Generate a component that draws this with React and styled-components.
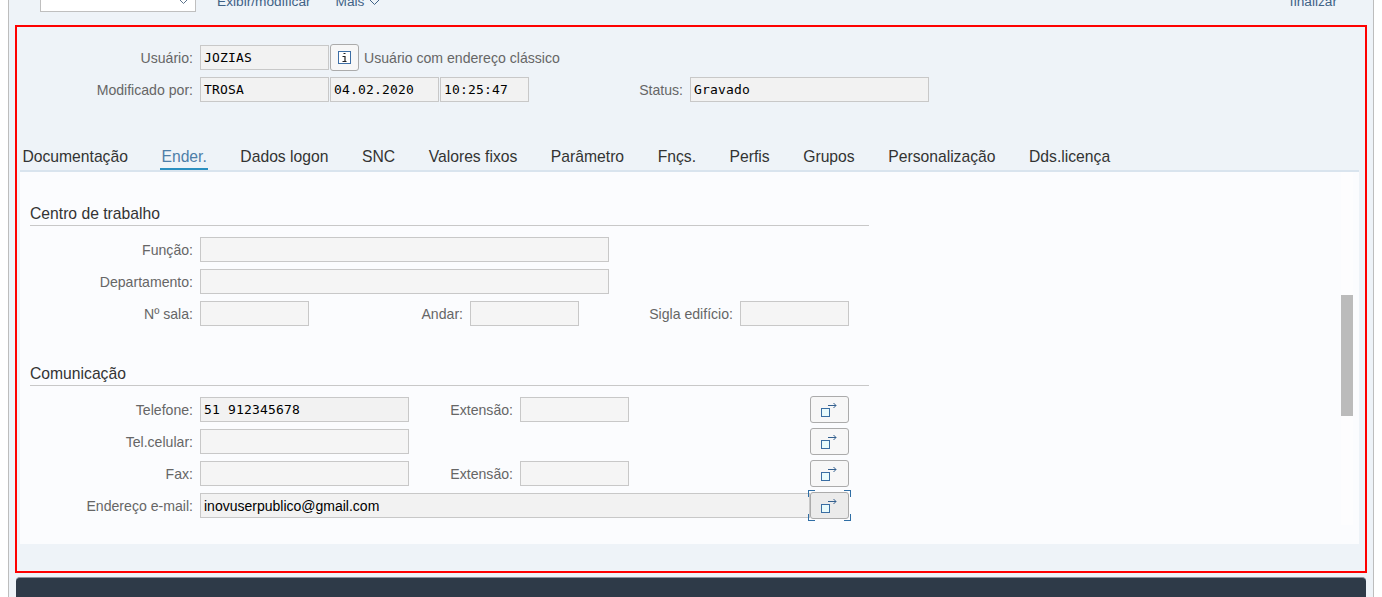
import React from "react";
import styled, { createGlobalStyle } from "styled-components";

const GlobalStyle = createGlobalStyle`
  html, body {
    margin: 0;
    height: 100%;
    background: #fff;
    overflow: hidden;
  }
  body {
    font-family: "Liberation Sans", Arial, sans-serif;
  }
`;

const Shell = styled.div`
  box-sizing: border-box;
  width: 1366px;
  height: 597px;
  margin-left: 8px;
  padding: 0 6px 0 6px;
  background: #eef3f8;
  border-left: 1px solid #bdbdbd;
  border-right: 1px solid #bdbdbd;
  overflow: hidden;
`;

const Toolbar = styled.div`
  height: 25px;
  display: flex;
  align-items: flex-start;
  padding: 0 30px 0 25px;
  overflow: hidden;
`;

const ToolSelect = styled.div`
  box-sizing: border-box;
  width: 156px;
  height: 30px;
  margin-top: -18px;
  flex: none;
  background: #fff;
  border: 1px solid #bfbfbf;
  display: flex;
  justify-content: flex-end;
  align-items: flex-end;
  padding: 0 6px 6px 0;
  color: #5b738b;
`;

const ToolLink = styled.span`
  font-size: 13.7px;
  line-height: 16px;
  margin-top: -6px;
  margin-left: ${(p) => (p.$end ? "auto" : `${p.$gap}px`)};
  color: #3f6286;
  display: inline-flex;
  align-items: center;
  gap: 5px;
  white-space: nowrap;
`;

const Outlined = styled.section`
  box-sizing: border-box;
  width: 1352px;
  height: 548px;
  border: 2px solid #fe0000;
  padding-top: 18px;
  display: flex;
  flex-direction: column;
`;

const HeaderRow = styled.div`
  height: 25px;
  margin-bottom: 7px;
  display: flex;
  align-items: center;
`;

const Label = styled.label`
  flex: none;
  box-sizing: border-box;
  width: ${(p) => p.$w}px;
  padding-right: 7px;
  text-align: right;
  font-size: 14.1px;
  color: #666;
  white-space: nowrap;
`;

const Field = styled.div`
  flex: none;
  box-sizing: border-box;
  width: ${(p) => p.$w}px;
  height: 25px;
  margin-right: ${(p) => p.$mr || 0}px;
  padding: 0 3px;
  background: ${(p) => (p.$empty ? "#f5f5f5" : "#f2f2f2")};
  border: 1px solid #c8c8c8;
  color: #000;
  font-family: ${(p) => (p.$sans ? '"Liberation Sans", Arial, sans-serif' : '"DejaVu Sans Mono", monospace')};
  font-size: ${(p) => (p.$sans ? "14px" : "13px")};
  letter-spacing: ${(p) => (p.$sans ? "0" : "0.17px")};
  line-height: ${(p) => (p.$sans ? "24px" : "23px")};
  white-space: pre;
`;

const InfoButton = styled.button`
  flex: none;
  box-sizing: border-box;
  width: 29px;
  height: 27px;
  margin: 0 5px 0 1px;
  padding: 0;
  background: #f7f7f7;
  border: 1px solid #ababab;
  border-radius: 3px;
  display: flex;
  align-items: center;
  justify-content: center;
`;

const Note = styled.span`
  font-size: 14.1px;
  color: #666;
`;

const Tabs = styled.div`
  margin: 34px 6px 0 3px;
  height: 27px;
  padding-left: 1.4px;
  display: flex;
  border-bottom: 2px solid #d9e4ee;
`;

const Tab = styled.div`
  box-sizing: border-box;
  height: 27px;
  margin-right: 31.55px;
  padding: 0 1px;
  line-height: 27px;
  font-size: 15.7px;
  white-space: nowrap;
  color: ${(p) => (p.$active ? "#4d7ea8" : "#333")};
  border-bottom: 2px solid ${(p) => (p.$active ? "#2a8fc0" : "transparent")};
`;

const Content = styled.div`
  position: relative;
  flex: none;
  box-sizing: border-box;
  height: 372px;
  margin: 0 6px 0 3px;
  padding: 29px 0 0 10px;
  background: #fbfcfe;
`;

const GroupTitle = styled.h3`
  box-sizing: border-box;
  width: 839px;
  height: 25px;
  margin: ${(p) => p.$top || 0}px 0 11px;
  font-size: 15.7px;
  font-weight: 400;
  line-height: 26px;
  color: #333;
  border-bottom: 1px solid #c8c8c8;
`;

const FormRow = styled.div`
  display: flex;
  align-items: center;
  height: 25px;
  margin-bottom: 7px;
  margin-left: -10px;
`;

const Spacer = styled.div`
  flex: none;
  width: ${(p) => p.$w}px;
`;

const LinkButton = styled.button`
  position: relative;
  flex: none;
  box-sizing: border-box;
  width: 39px;
  height: 27px;
  padding: 0;
  background: ${(p) => (p.$focused ? "#ebebeb" : "#f7f7f7")};
  border: 1px solid #ababab;
  border-radius: 3px;
  display: flex;
  align-items: center;
  justify-content: center;
`;

const FocusCorner = styled.span`
  position: absolute;
  width: 6px;
  height: 6px;
  border-color: #2f6ea5;
  border-style: solid;
  border-width: 0;
  ${(p) => (p.$v === "top" ? "top: -3px; border-top-width: 1px;" : "bottom: -3px; border-bottom-width: 1px;")}
  ${(p) => (p.$h === "left" ? "left: -3px; border-left-width: 1px;" : "right: -3px; border-right-width: 1px;")}
`;

const ScrollTrack = styled.div`
  position: absolute;
  top: 0;
  right: 6px;
  bottom: 19px;
  width: 12px;
  background: #fdfdfe;
`;

const ScrollThumb = styled.div`
  margin-top: 123px;
  height: 121px;
  background: #bbbbbb;
`;

const Footer = styled.div`
  height: 40px;
  margin: 4px 0 0 1px;
  width: 1350px;
  background: #2e3a48;
  border-top: 1px solid #8d949c;
  border-radius: 4px 4px 0 0;
`;

const Chevron = () => (
  <svg width="11" height="7" viewBox="0 0 11 7" fill="none" stroke="currentColor" strokeWidth="1">
    <path d="M1 1l4.5 4.5L10 1" />
  </svg>
);

const InfoIcon = () => (
  <svg width="13" height="13" viewBox="0 0 13 13" fill="none">
    <rect x="0.5" y="0.5" width="12" height="12" fill="#fff" stroke="#3d6ea5" />
    <path d="M5.5 2.5h2M4.5 5.5h2.5v5M4.5 10.5h4" stroke="#222" strokeWidth="1.2" />
  </svg>
);

const OutIcon = () => (
  <svg width="17" height="15" viewBox="0 0 17 15" fill="none">
    <rect x="0.5" y="6.5" width="8" height="8" fill="#e9fbfc" stroke="#3a6ea3" />
    <path d="M7 3.5h8M12.5 1l2.5 2.5L12.5 6" stroke="#34608f" strokeWidth="1" />
  </svg>
);

const tabs = [
  "Documentação",
  "Ender.",
  "Dados logon",
  "SNC",
  "Valores fixos",
  "Parâmetro",
  "Fnçs.",
  "Perfis",
  "Grupos",
  "Personalização",
  "Dds.licença",
];

export default function App() {
  return (
    <>
      <GlobalStyle />
      <Shell>
        <Toolbar>
          <ToolSelect>
            <Chevron />
          </ToolSelect>
          <ToolLink $gap={21}>Exibir/modificar</ToolLink>
          <ToolLink $gap={25}>
            Mais <Chevron />
          </ToolLink>
          <ToolLink $end>finalizar</ToolLink>
        </Toolbar>
        <Outlined>
          <HeaderRow>
            <Label $w={183}>Usuário:</Label>
            <Field $w={129}>JOZIAS</Field>
            <InfoButton>
              <InfoIcon />
            </InfoButton>
            <Note>Usuário com endereço clássico</Note>
          </HeaderRow>
          <HeaderRow>
            <Label $w={183}>Modificado por:</Label>
            <Field $w={129} $mr={1}>TROSA</Field>
            <Field $w={109} $mr={1}>04.02.2020</Field>
            <Field $w={89}>10:25:47</Field>
            <Label $w={161}>Status:</Label>
            <Field $w={239}>Gravado</Field>
          </HeaderRow>
          <Tabs>
            {tabs.map((t) => (
              <Tab key={t} $active={t === "Ender."}>
                {t}
              </Tab>
            ))}
          </Tabs>
          <Content>
            <GroupTitle>Centro de trabalho</GroupTitle>
            <FormRow>
              <Label $w={180}>Função:</Label>
              <Field $w={409} $empty />
            </FormRow>
            <FormRow>
              <Label $w={180}>Departamento:</Label>
              <Field $w={409} $empty />
            </FormRow>
            <FormRow>
              <Label $w={180}>Nº sala:</Label>
              <Field $w={109} $empty />
              <Label $w={161}>Andar:</Label>
              <Field $w={109} $empty />
              <Label $w={161}>Sigla edifício:</Label>
              <Field $w={109} $empty />
            </FormRow>
            <GroupTitle $top={35}>Comunicação</GroupTitle>
            <FormRow>
              <Label $w={180}>Telefone:</Label>
              <Field $w={209}>51 912345678</Field>
              <Label $w={111}>Extensão:</Label>
              <Field $w={109} $empty />
              <Spacer $w={181} />
              <LinkButton>
                <OutIcon />
              </LinkButton>
            </FormRow>
            <FormRow>
              <Label $w={180}>Tel.celular:</Label>
              <Field $w={209} $empty />
              <Spacer $w={401} />
              <LinkButton>
                <OutIcon />
              </LinkButton>
            </FormRow>
            <FormRow>
              <Label $w={180}>Fax:</Label>
              <Field $w={209} $empty />
              <Label $w={111}>Extensão:</Label>
              <Field $w={109} $empty />
              <Spacer $w={181} />
              <LinkButton>
                <OutIcon />
              </LinkButton>
            </FormRow>
            <FormRow>
              <Label $w={180}>Endereço e-mail:</Label>
              <Field $w={610} $sans>inovuserpublico@gmail.com</Field>
              <LinkButton $focused>
                <OutIcon />
                <FocusCorner $v="top" $h="left" />
                <FocusCorner $v="top" $h="right" />
                <FocusCorner $v="bottom" $h="left" />
                <FocusCorner $v="bottom" $h="right" />
              </LinkButton>
            </FormRow>
            <ScrollTrack>
              <ScrollThumb />
            </ScrollTrack>
          </Content>
        </Outlined>
        <Footer />
      </Shell>
    </>
  );
}
